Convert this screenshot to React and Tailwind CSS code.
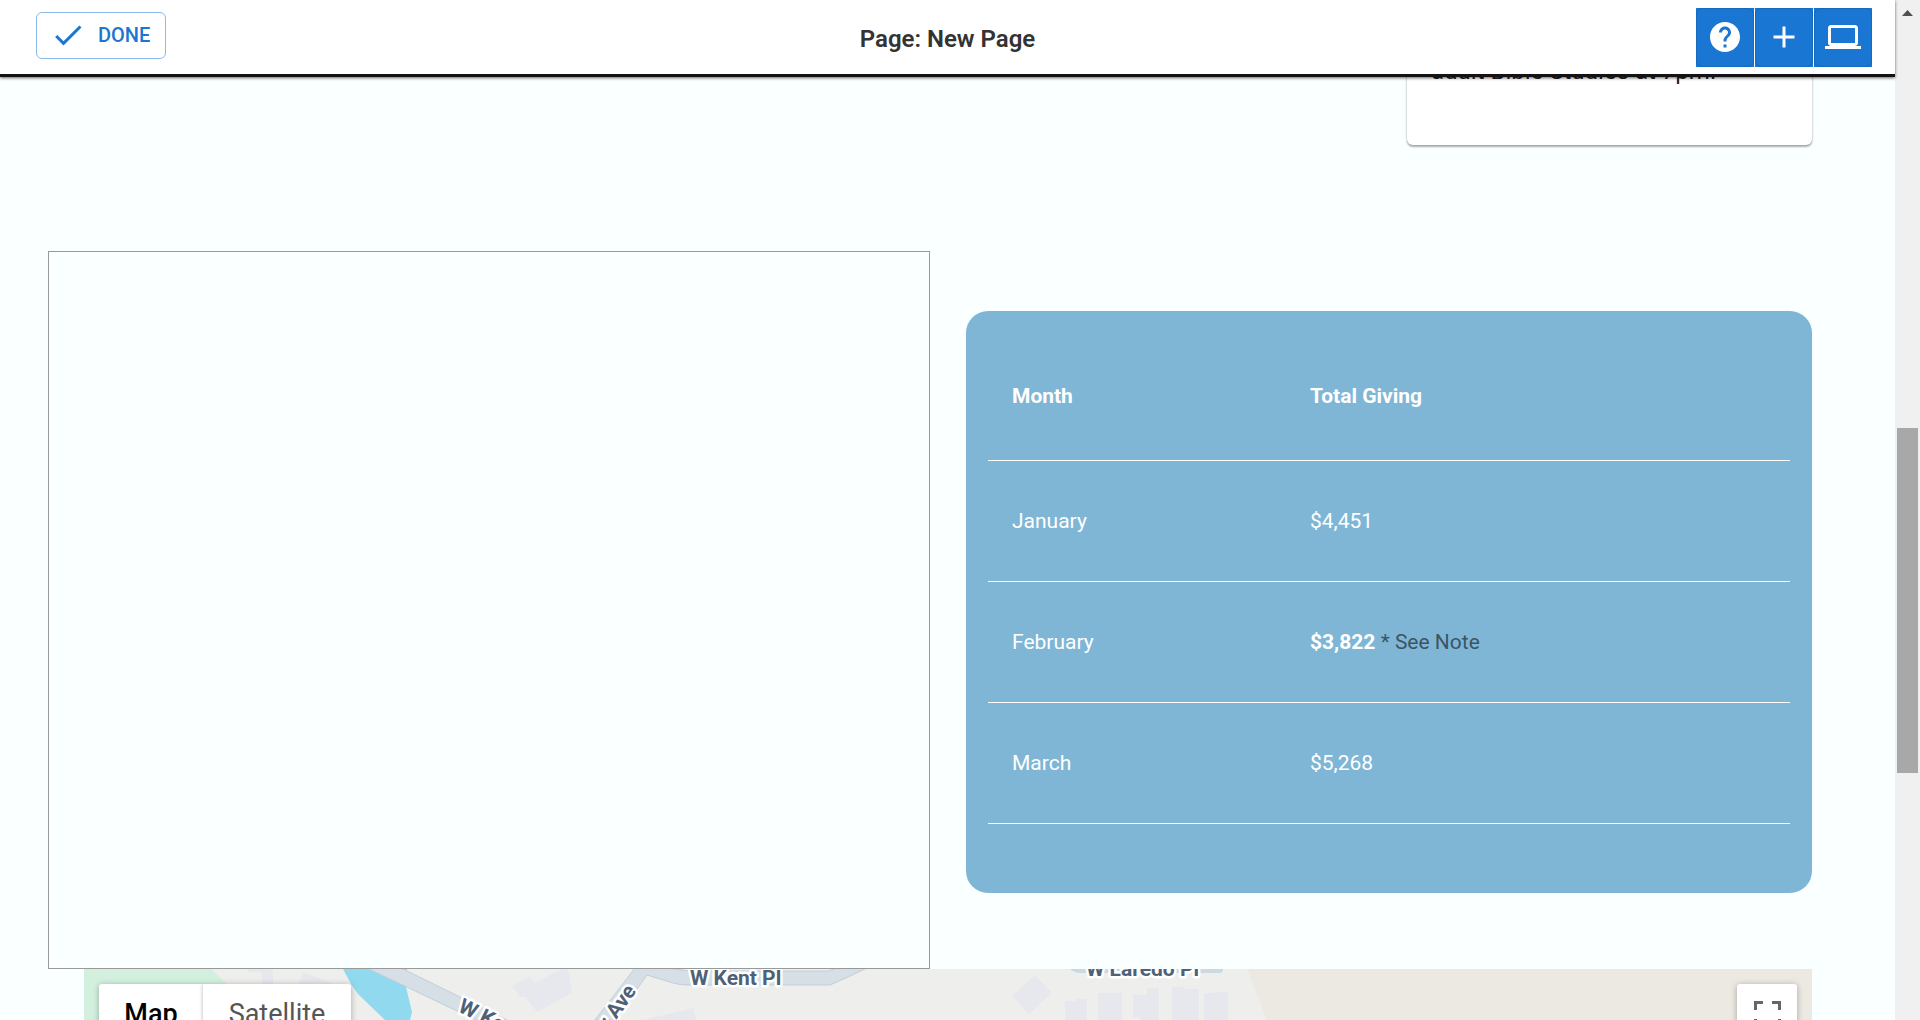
import React from "react";

const rows = [
  { month: "January", total: "$4,451" },
  { month: "February", total: "$3,822", note: "* See Note" },
  { month: "March", total: "$5,268" },
];

function Icon({ path, className }) {
  return (
    <svg viewBox="0 0 24 24" fill="currentColor" aria-hidden="true" className={className}>
      <path d={path} />
    </svg>
  );
}

const CHECK = "M9 16.17 4.83 12l-1.42 1.41L9 19 21 7l-1.41-1.41z";
const HELP =
  "M12 2C6.48 2 2 6.48 2 12s4.48 10 10 10 10-4.48 10-10S17.52 2 12 2zm1 17h-2v-2h2v2zm2.07-7.75-.9.92C13.45 12.9 13 13.5 13 15h-2v-.5c0-1.1.45-2.1 1.17-2.83l1.24-1.26c.37-.36.59-.86.59-1.41 0-1.1-.9-2-2-2s-2 .9-2 2H8c0-2.21 1.79-4 4-4s4 1.79 4 4c0 .88-.36 1.68-.93 2.25z";
const ADD = "M19 13h-6v6h-2v-6H5v-2h6V5h2v6h6v2z";
const LAPTOP =
  "M20 18c1.1 0 1.99-.9 1.99-2L22 6c0-1.1-.9-2-2-2H4c-1.1 0-2 .9-2 2v10c0 1.1.9 2 2 2H0v2h24v-2h-4zM4 6h16v10H4V6z";

function ToolButton({ label, path }) {
  return (
    <div className="bg-[#1976d2]">
      <button
        type="button"
        aria-label={label}
        className="flex h-[59px] w-[58px] items-center justify-center rounded-md border border-[#1669bb] pb-0.5 text-white"
      >
        <Icon path={path} className="h-9 w-9" />
      </button>
    </div>
  );
}

function Divider() {
  return (
    <div className="h-[59px] bg-[#1976d2]">
      <div className="h-full w-px rounded-full bg-white" />
    </div>
  );
}

function Header() {
  return (
    <header className="relative z-10 grid h-[77px] shrink-0 grid-cols-[1fr_auto_1fr] border-b-[3px] border-[#141214] bg-white shadow-[0_1px_3px_rgba(0,0,0,0.6)]">
      <div className="pt-3 pl-9">
        <button
          type="button"
          className="flex h-[47px] w-[130px] items-center gap-3 rounded-md border border-[#8cbae8] pb-0.5 pl-[13px] text-xl font-medium text-[#1976d2]"
        >
          <Icon path={CHECK} className="h-9 w-9 shrink-0" />
          DONE
        </button>
      </div>
      <h1 className="pt-[21px] text-2xl leading-9 font-semibold text-[#333]">Page: New Page</h1>
      <div className="flex items-start justify-end pt-2 pr-[23px]">
        <ToolButton label="Help" path={HELP} />
        <Divider />
        <ToolButton label="Add content" path={ADD} />
        <Divider />
        <ToolButton label="Preview on desktop" path={LAPTOP} />
      </div>
    </header>
  );
}

function GivingTable() {
  return (
    <div className="rounded-[22px] bg-[#7fb6d6] px-[22px] pt-[22px] pb-[69px] text-white">
      <table className="w-full table-fixed border-collapse text-left text-[21px] leading-8">
        <thead>
          <tr className="h-[127px] border-b border-white">
            <th className="w-[298px] px-6 font-bold">Month</th>
            <th className="px-6 font-bold">Total Giving</th>
          </tr>
        </thead>
        <tbody>
          {rows.map((r) => (
            <tr key={r.month} className="h-[121px] border-b border-white">
              <td className="px-6">{r.month}</td>
              <td className="px-6">
                {r.note ? (
                  <>
                    <strong className="font-bold">{r.total}</strong>{" "}
                    <span className="text-[#3c5563]">{r.note}</span>
                  </>
                ) : (
                  r.total
                )}
              </td>
            </tr>
          ))}
        </tbody>
      </table>
    </div>
  );
}

function StreetMap() {
  return (
    <section aria-label="Map" className="relative mr-[83px] ml-[84px] flex-1 overflow-hidden bg-[#ece9e2]">
      <svg viewBox="0 0 1728 51" preserveAspectRatio="xMinYMin slice" className="h-full w-full">
        <path d="M0 0H1163L1183 51H0z" fill="#eeeeec" />
        <path d="M0 0H127L155 26V51H0z" fill="#d3f0df" />
        <g fill="#e7e8ee">
          <path d="M164 0H189V15H178V3H164zM219 3L249 15H214z" />
          <path d="M428 17L446 8L451 14L478 0H483L485 4L488 24L453 43L442 28L436 28z" />
          <path d="M559 51L609 39L612 51z" />
          <path d="M951 6L968 24L945 45L928 27z" />
          <path d="M981 32H992V30H1003V51H981zM1014 24H1038V51H1014zM1049 26H1063V19H1075V51H1056V48H1049zM1088 18H1100V20H1115V51H1088zM1120 24L1144 23V51H1120z" />
        </g>
        <path d="M259 0H323L322 18L328 43L326 51H301L274 25L267 15z" fill="#90d9ee" />
        <g fill="#d6dfe6" stroke="#c3ced8">
          <path d="M283 -1H317L423 51H392z" />
          <path d="M511 51L551 -1H583L606 2H744L753 -1H783L764 8L746 16H606Q595 16 589 14L563 6L531 51z" />
        </g>
        <path d="M986 0H1139Q1139 4 1136 4H996Q989 3 986 0z" fill="#cbd9e1" />
        <g
          fill="#4e6177"
          stroke="#fff"
          strokeWidth="5"
          strokeLinejoin="round"
          paintOrder="stroke"
          fontSize="21"
          fontWeight="700"
        >
          <text x="606" y="16">W Kent Pl</text>
          <text x="1002" y="7">W Laredo Pl</text>
          <text transform="translate(373 42) rotate(26)">W Kent Pl</text>
          <text transform="translate(553 22) rotate(-54)" textAnchor="end">r Ave</text>
        </g>
      </svg>
      <div className="absolute top-[15px] left-[15px] flex h-[60px] overflow-hidden rounded-[3px] bg-white text-[27px] shadow-[0_1px_6px_rgba(0,0,0,0.3)]">
        <button type="button" className="w-[104px] font-medium text-black">Map</button>
        <button type="button" className="w-[148px] text-[#565656] shadow-[0_0_4px_rgba(0,0,0,0.3)]">Satellite</button>
      </div>
      <button
        type="button"
        aria-label="Toggle fullscreen view"
        className="absolute top-[15px] right-[15px] flex h-[60px] w-[60px] items-center justify-center rounded-[3px] bg-white text-[#666] shadow-[0_1px_6px_rgba(0,0,0,0.3)]"
      >
        <svg viewBox="0 0 18 18" fill="currentColor" aria-hidden="true" className="h-[27px] w-[27px]">
          <path d="M0 0v6h2V2h4V0H0zm16 0h-4v2h4v4h2V0h-2zm0 16h-4v2h6v-6h-2v4zM2 12H0v6h6v-2H2v-4z" />
        </svg>
      </button>
    </section>
  );
}

function Scrollbar() {
  return (
    <div aria-hidden="true" className="flex w-[25px] shrink-0 flex-col items-center bg-[#f0f0f0] pt-[10px]">
      <svg viewBox="0 0 11 6" className="h-[6px] w-[11px] shrink-0" fill="#505050">
        <path d="M5.5 0L11 6H0z" />
      </svg>
      <div className="grow-[412]" />
      <div className="w-[21px] grow-[345] bg-[#a8a8a8]" />
      <div className="grow-[247]" />
    </div>
  );
}

export default function App() {
  return (
    <div className="flex h-screen overflow-hidden bg-[#faffff] font-['Roboto',sans-serif]">
      <div className="flex min-w-0 flex-1 flex-col">
        <Header />
        <main className="flex min-h-0 flex-1 flex-col">
          <div className="flex shrink-0 justify-end pr-[83px]">
            <article className="-mt-8 w-[405px] rounded-md bg-white px-6 pt-2 pb-14 text-2xl leading-9 text-black/90 shadow-[0_2px_2px_rgba(0,0,0,0.3),0_0_3px_rgba(0,0,0,0.15)]">
              <p>adult Bible Studies at 7pm.</p>
            </article>
          </div>
          <div className="mt-[106px] flex shrink-0 items-stretch gap-9 pr-[83px] pl-12">
            <iframe title="Embedded content" className="h-[718px] w-[882px] shrink-0 border border-[#999]" />
            <div className="min-w-0 flex-1 pt-[60px]">
              <GivingTable />
            </div>
          </div>
          <StreetMap />
        </main>
      </div>
      <Scrollbar />
    </div>
  );
}
